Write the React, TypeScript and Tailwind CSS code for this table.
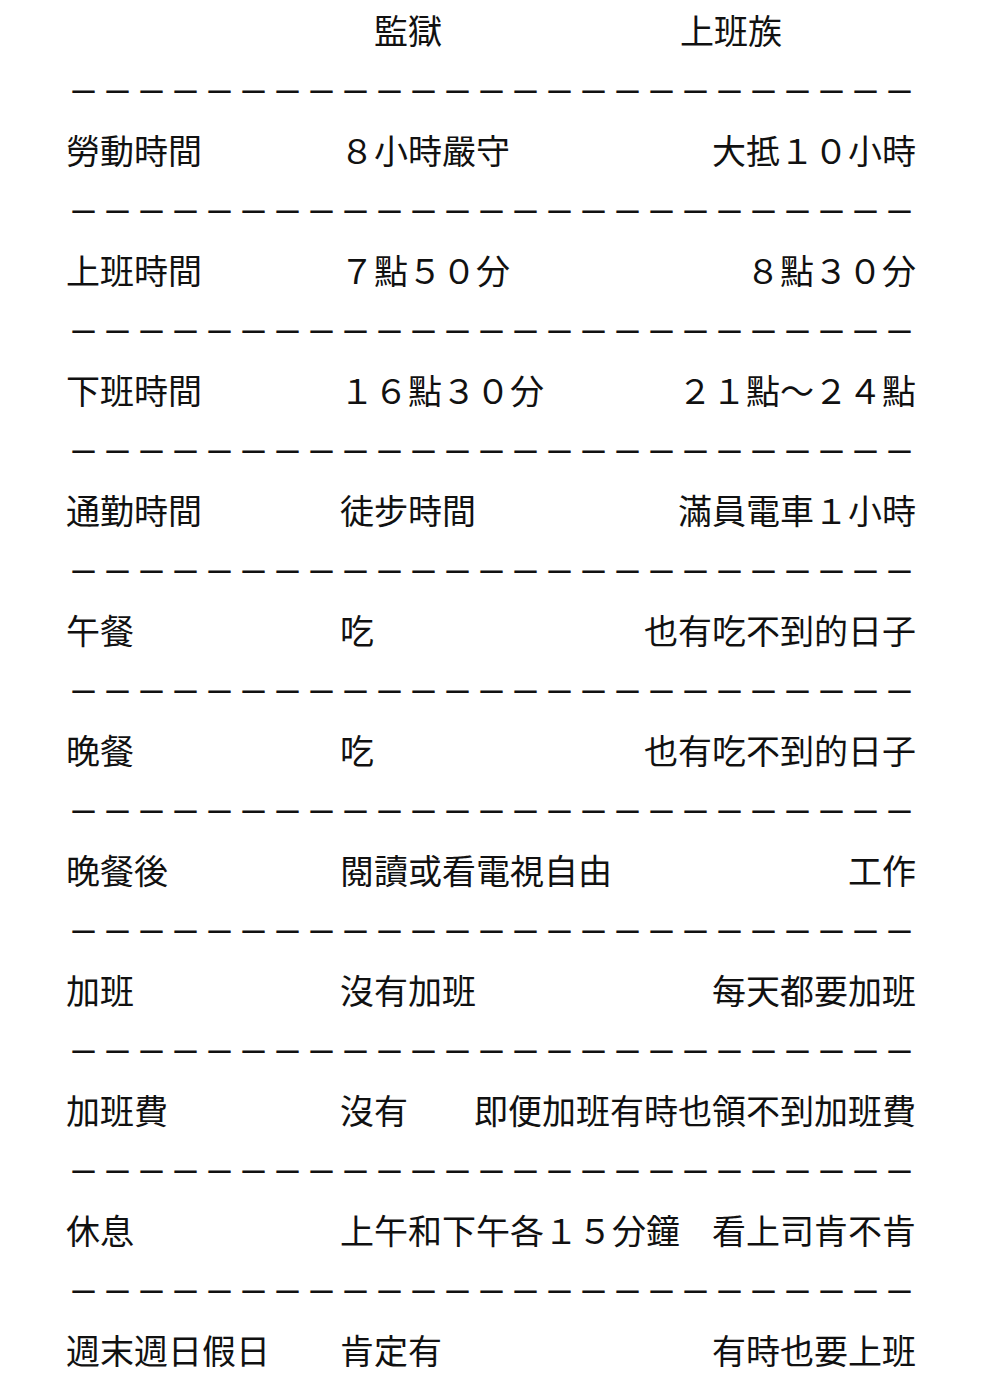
const rows: [string, string, string][] = [
  ["勞動時間", "８小時嚴守", "大抵１０小時"],
  ["上班時間", "７點５０分", "８點３０分"],
  ["下班時間", "１６點３０分", "２１點～２４點"],
  ["通勤時間", "徒步時間", "滿員電車１小時"],
  ["午餐", "吃", "也有吃不到的日子"],
  ["晚餐", "吃", "也有吃不到的日子"],
  ["晚餐後", "閱讀或看電視自由", "工作"],
  ["加班", "沒有加班", "每天都要加班"],
  ["加班費", "沒有", "即便加班有時也領不到加班費"],
  ["休息", "上午和下午各１５分鐘", "看上司肯不肯"],
  ["週末週日假日", "肯定有", "有時也要上班"],
]

// full-width dashes; slightly smaller glyph + tracking keeps the 34px pitch with wider gaps
function DashLine() {
  return (
    <div className="whitespace-nowrap pl-[2px] text-[31px] font-medium leading-[60px] tracking-[3px]">
      {"－".repeat(25)}
    </div>
  )
}

export default function App() {
  return (
    <div
      className="min-h-[1396px] bg-white pl-[66px] text-[34px] leading-[60px] text-[#111]"
      style={{ fontFamily: '"Noto Sans CJK JP", "Noto Sans CJK TC", sans-serif' }}
    >
      <div className="w-[850px]">
        {/* header */}
        <div className="flex">
          <div className="w-[308px] shrink-0" />
          <div className="w-[306px] shrink-0">監獄</div>
          <div>上班族</div>
        </div>

        {rows.map(([label, prison, office]) => (
          <div key={label}>
            <DashLine />
            <div className="flex whitespace-nowrap">
              <div className="w-[274px] shrink-0">{label}</div>
              <div>{prison}</div>
              <div className="ml-auto">{office}</div>
            </div>
          </div>
        ))}
      </div>
    </div>
  )
}
